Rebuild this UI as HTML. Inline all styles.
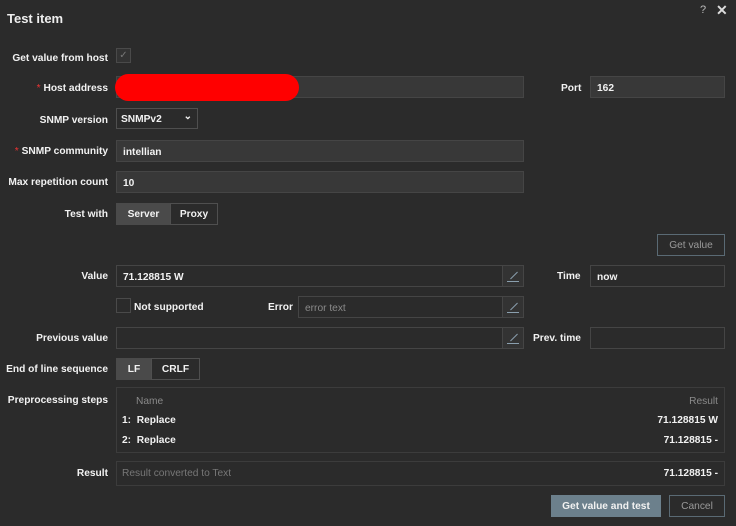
<!DOCTYPE html>
<html><head><meta charset="utf-8"><style>
*{box-sizing:border-box;margin:0;padding:0}
body{width:736px;height:526px;background:#2b2b2b;font-family:"Liberation Sans",Arial,sans-serif;font-size:10.2px;color:#f2f2f2;position:relative;overflow:hidden;white-space:nowrap}
.a{position:absolute}
.l{position:absolute;text-align:right;width:108px;left:0;font-weight:bold;color:#f2f2f2;margin-top:2px}
.in{position:absolute;background:#2b2b2b;border:1px solid #454545;height:22px;padding:6px 6px;font-weight:bold}
.dk{background:#383838}
.btn{position:absolute;border:1px solid #4f4f4f;height:22px;text-align:center;line-height:21px;font-weight:bold}
.ed{position:absolute;width:22px;height:22px;border:1px solid #454545;background:#333}
.ed:after{content:"";position:absolute;left:4px;top:15px;width:12px;height:1px;background:#8a9fae}
.ed:before{content:"";position:absolute;left:6px;top:9px;width:10px;height:1px;background:#8a9fae;transform:rotate(-45deg)}
.st{color:#e33;font-weight:normal}
.m{margin-top:2px}
</style></head><body>
<div class="a" style="left:7px;top:11px;font-size:13px;font-weight:bold;color:#eee">Test item</div>
<div class="a" style="left:700px;top:4px;color:#bbb;font-size:11px">?</div>
<div class="a" style="left:716px;top:2px;color:#ddd;font-size:14px;font-weight:bold">✕</div>

<div class="l" style="top:51px">Get value from host</div>
<div class="a" style="left:116px;top:48px;width:15px;height:15px;border:1px solid #4a4a4a;background:#333;color:#777;font-size:10px;text-align:center;line-height:13px">✓</div>

<div class="l" style="top:81px"><span class="st">*</span> Host address</div>
<div class="in dk" style="left:116px;top:76px;width:408px"></div>
<div class="a" style="left:115px;top:74px;width:184px;height:27px;background:#f00;border-radius:14px"></div>
<div class="a m" style="left:561px;top:81px;font-weight:bold">Port</div>
<div class="in dk" style="left:590px;top:76px;width:135px">162</div>

<div class="l" style="top:113px">SNMP version</div>
<div class="in" style="left:116px;top:108px;width:82px;height:21px;padding:5px 4px;background:#2b2b2b;border-color:#4f4f4f">SNMPv2<span style="position:absolute;right:5px;top:2px;font-size:10px">⌄</span></div>

<div class="l" style="top:144px"><span class="st">*</span> SNMP community</div>
<div class="in dk" style="left:116px;top:140px;width:408px">intellian</div>
<div class="l" style="top:175px">Max repetition count</div>
<div class="in dk" style="left:116px;top:171px;width:408px">10</div>

<div class="l" style="top:207px">Test with</div>
<div class="btn" style="left:116px;top:203px;width:55px;background:#4a4a4a;border-color:#4a4a4a">Server</div>
<div class="btn" style="left:170px;top:203px;width:48px;background:#2b2b2b">Proxy</div>

<div class="btn" style="left:657px;top:234px;width:68px;color:#9a9a9a;font-weight:normal;border-color:#5a6a74">Get value</div>

<div class="l" style="top:269px">Value</div>
<div class="in" style="left:116px;top:265px;width:387px">71.128815 W</div>
<div class="ed" style="left:502px;top:265px"></div>
<div class="a m" style="left:557px;top:269px;font-weight:bold">Time</div>
<div class="in" style="left:590px;top:265px;width:135px">now</div>

<div class="a" style="left:116px;top:298px;width:15px;height:15px;border:1px solid #4a4a4a"></div>
<div class="a m" style="left:134px;top:300px;font-weight:bold">Not supported</div>
<div class="a m" style="left:268px;top:300px;font-weight:bold">Error</div>
<div class="in" style="left:298px;top:296px;width:205px;color:#8a8a8a;font-weight:normal">error text</div>
<div class="ed" style="left:502px;top:296px"></div>

<div class="l" style="top:331px">Previous value</div>
<div class="in" style="left:116px;top:327px;width:387px"></div>
<div class="ed" style="left:502px;top:327px"></div>
<div class="a m" style="left:533px;top:331px;font-weight:bold">Prev. time</div>
<div class="in" style="left:590px;top:327px;width:135px"></div>

<div class="l" style="top:362px">End of line sequence</div>
<div class="btn" style="left:116px;top:358px;width:36px;background:#4a4a4a;border-color:#4a4a4a">LF</div>
<div class="btn" style="left:151px;top:358px;width:49px">CRLF</div>

<div class="l" style="top:393px">Preprocessing steps</div>
<div class="a" style="left:116px;top:387px;width:609px;height:66px;border:1px solid #3c3c3c"></div>
<div class="a m" style="left:136px;top:394px;color:#8a8a8a">Name</div>
<div class="a m" style="right:18px;top:394px;color:#8a8a8a">Result</div>
<div class="a m" style="left:122px;top:413px;font-weight:bold">1:&nbsp; Replace</div>
<div class="a m" style="right:18px;top:413px;font-weight:bold">71.128815 W</div>
<div class="a m" style="left:122px;top:433px;font-weight:bold">2:&nbsp; Replace</div>
<div class="a m" style="right:18px;top:433px;font-weight:bold">71.128815 -</div>

<div class="l" style="top:466px">Result</div>
<div class="a" style="left:116px;top:461px;width:609px;height:25px;border:1px solid #3c3c3c"></div>
<div class="a m" style="left:122px;top:466px;color:#777">Result converted to Text</div>
<div class="a m" style="right:18px;top:466px;font-weight:bold">71.128815 -</div>

<div class="btn" style="left:551px;top:495px;width:110px;background:#6c808c;border-color:#6c808c">Get value and test</div>
<div class="btn" style="left:669px;top:495px;width:56px;color:#9a9a9a;font-weight:normal;border-color:#5a6a74">Cancel</div>
</body></html>
